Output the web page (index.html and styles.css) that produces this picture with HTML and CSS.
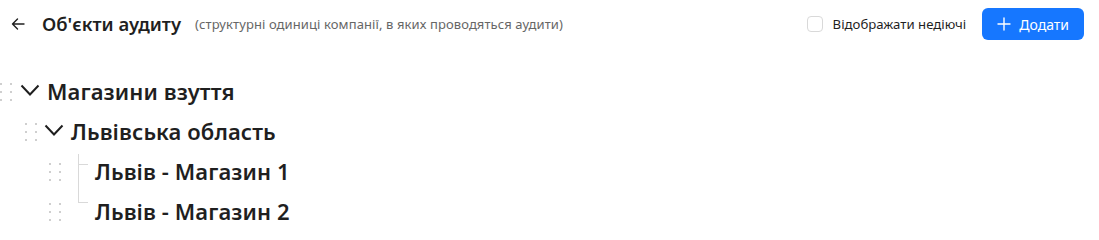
FILE: index.html
```html
<!DOCTYPE html>
<html lang="uk">
<head>
<meta charset="utf-8">
<title>Об'єкти аудиту</title>
<link rel="stylesheet" href="styles.css">
</head>
<body>
<div class="page">
  <header class="header">
    <div class="header-left">
      <button class="back" aria-label="Назад">
        <svg width="16" height="16" viewBox="0 0 16 16" fill="none" stroke="#1f1f1f" stroke-width="1.4" stroke-linecap="round" stroke-linejoin="round"><path d="M14 8H2.5M7.5 3L2.5 8l5 5"/></svg>
      </button>
      <h1 class="title">Об'єкти аудиту</h1>
      <span class="subtitle">(структурні одиниці компанії, в яких проводяться аудити)</span>
    </div>
    <div class="header-right">
      <label class="check"><span class="check-box"></span><span>Відображати недіючі</span></label>
      <button class="btn-primary">
        <svg width="14" height="14" viewBox="0 0 14 14" stroke="#fff" stroke-width="1.4" stroke-linecap="round"><path d="M7 1v12M1 7h12"/></svg>
        <span>Додати</span>
      </button>
    </div>
  </header>

  <div class="tree">
    <div class="node lvl0">
      <span class="handle"></span>
      <span class="switcher"><svg width="20" height="12" viewBox="0 0 20 12" fill="none" stroke="#1f1f1f" stroke-width="2"><path d="M1.5 1.5l8.5 9 8.5-9"/></svg></span>
      <span class="label">Магазини взуття</span>
    </div>
    <div class="node lvl1">
      <span class="handle"></span>
      <span class="switcher"><svg width="20" height="12" viewBox="0 0 20 12" fill="none" stroke="#1f1f1f" stroke-width="2"><path d="M1.5 1.5l8.5 9 8.5-9"/></svg></span>
      <span class="label">Львівська область</span>
    </div>
    <div class="node lvl2 leaf">
      <span class="handle"></span>
      <span class="switcher line"></span>
      <span class="label">Львів - Магазин 1</span>
    </div>
    <div class="node lvl2 leaf last">
      <span class="handle"></span>
      <span class="switcher line"></span>
      <span class="label">Львів - Магазин 2</span>
    </div>
  </div>
</div>
</body>
</html>
```

FILE: styles.css
```css
* { box-sizing: border-box; }
html, body { margin: 0; padding: 0; background: #fff; }
body {
  font-family: "Noto Sans", "Open Sans", "Liberation Sans", sans-serif;
  color: #1f1f1f;
}
.page { width: 1099px; }

.header {
  display: flex;
  align-items: center;
  justify-content: space-between;
  height: 48px;
  padding: 0 15px 0 10px;
}
.header-left { display: flex; align-items: center; }
.back {
  border: 0; background: none; padding: 0;
  width: 16px; height: 16px;
  display: flex; align-items: center; justify-content: center;
  margin-right: 16px;
}
.title {
  margin: 0;
  font-size: 18.5px;
  font-weight: 600;
  line-height: 24px;
}
.subtitle {
  margin-left: 14px;
  font-size: 13px;
  letter-spacing: 0.1px;
  color: #666;
  line-height: 20px;
}
.header-right { display: flex; align-items: center; }
.check {
  display: flex; align-items: center;
  font-size: 13.2px; color: #1f1f1f;
  margin-right: 16px;
}
.check-box {
  width: 16px; height: 16px;
  border: 1px solid #d9d9d9;
  border-radius: 4px;
  margin-right: 10px;
}
.btn-primary {
  display: flex; align-items: center; gap: 8px;
  height: 32px;
  padding: 0 15px;
  background: #1677ff;
  color: #fff;
  border: 0;
  border-radius: 6px;
  font-family: inherit;
  font-size: 14px;
}

.tree { padding-top: 23px; }
.node {
  display: flex;
  align-items: center;
  height: 40px;
}
.lvl1 { padding-left: 24px; }
.lvl2 { padding-left: 48px; }
.handle {
  width: 14px; height: 24px;
  background-image: radial-gradient(circle, #cfcfcf 1.2px, transparent 1.5px);
  background-size: 10px 8px;
  background-position: -3px 0;
  margin-right: 4px;
  position: relative;
  top: 1px;
}
.lvl0 .handle { background-position: -4px 0; }
.switcher {
  width: 24px; height: 40px;
  display: flex; align-items: center; justify-content: center;
  position: relative;
}
.switcher svg { position: relative; top: -1px; }
.line::before {
  content: "";
  position: absolute;
  left: 11.5px; top: 3px; bottom: 0;
  border-left: 1px solid #d9d9d9;
}
.last .line::before { top: 0; bottom: 28px; }
.line::after {
  content: "";
  position: absolute;
  left: 12px; top: 13px;
  width: 10px;
  border-top: 1px solid #d9d9d9;
}
.last .line::after { top: 11px; }
.label {
  padding-left: 5px;
  font-size: 22px;
  font-weight: 600;
  letter-spacing: 0.1px;
  line-height: 28px;
}
```
